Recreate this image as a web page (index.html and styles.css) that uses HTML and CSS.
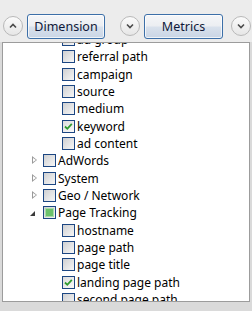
FILE: index.html
```html
<!DOCTYPE html>
<html lang="en">
<head>
    <meta charset="UTF-8">
    <title>Dimension picker</title>
    <link rel="stylesheet" href="styles.css">
</head>
<body>
    <div class="toolbar">
        <button class="round" title="Up">
            <svg width="10" height="10" viewBox="0 0 10 10"><path d="M2 6.5 L5 3.5 L8 6.5" fill="none" stroke="#4a4a4a" stroke-width="1.6"/></svg>
        </button>
        <button class="pick">Dimension</button>
        <button class="round gap" title="Down">
            <svg width="10" height="10" viewBox="0 0 10 10"><path d="M2 3.5 L5 6.5 L8 3.5" fill="none" stroke="#4a4a4a" stroke-width="1.6"/></svg>
        </button>
        <button class="pick metrics">Metrics</button>
        <button class="round last" title="Down">
            <svg width="10" height="10" viewBox="0 0 10 10"><path d="M2 3.5 L5 6.5 L8 3.5" fill="none" stroke="#4a4a4a" stroke-width="1.6"/></svg>
        </button>
    </div>

    <div class="tree">
        <ul class="items">
            <li class="row child"><span class="box"></span><span class="label">ad group</span></li>
            <li class="row child"><span class="box"></span><span class="label">referral path</span></li>
            <li class="row child"><span class="box"></span><span class="label">campaign</span></li>
            <li class="row child"><span class="box"></span><span class="label">source</span></li>
            <li class="row child"><span class="box"></span><span class="label">medium</span></li>
            <li class="row child"><span class="box checked"><svg width="11" height="11" viewBox="0 0 11 11"><path d="M2 5.5 L4.3 7.8 L8.8 2.8" fill="none" stroke="#2f9b2f" stroke-width="1.8"/></svg></span><span class="label">keyword</span></li>
            <li class="row child"><span class="box"></span><span class="label">ad content</span></li>
            <li class="row"><span class="expander closed"></span><span class="box"></span><span class="label">AdWords</span></li>
            <li class="row"><span class="expander closed"></span><span class="box"></span><span class="label">System</span></li>
            <li class="row"><span class="expander closed"></span><span class="box"></span><span class="label">Geo / Network</span></li>
            <li class="row"><span class="expander open"></span><span class="box partial"></span><span class="label">Page Tracking</span></li>
            <li class="row child"><span class="box"></span><span class="label">hostname</span></li>
            <li class="row child"><span class="box"></span><span class="label">page path</span></li>
            <li class="row child"><span class="box"></span><span class="label">page title</span></li>
            <li class="row child"><span class="box checked"><svg width="11" height="11" viewBox="0 0 11 11"><path d="M2 5.5 L4.3 7.8 L8.8 2.8" fill="none" stroke="#2f9b2f" stroke-width="1.8"/></svg></span><span class="label">landing page path</span></li>
            <li class="row child"><span class="box"></span><span class="label">second page path</span></li>
            <li class="row child"><span class="box"></span><span class="label">exit page path</span></li>
        </ul>
    </div>
</body>
</html>
```

FILE: styles.css
```css
body {
    margin: 0;
    background-color: #dadada;
    font-family: "Noto Sans", "Open Sans", sans-serif;
    font-size: 12px;
    color: #000;
}
.toolbar {
    display: flex;
    align-items: center;
    height: 42px;
    padding: 10px 0 0 3px;
    box-sizing: border-box;
    background-color: #ececec;
}
.round {
    width: 20px;
    height: 20px;
    padding: 0;
    border: 1px solid #b9b9b9;
    border-radius: 50%;
    background: linear-gradient(#fbfbfb, #e6e6e6);
    display: flex;
    align-items: center;
    justify-content: center;
}
.round.gap {
    margin-left: 15px;
}
.round.last {
    margin-left: 8px;
}
.pick {
    width: 78px;
    height: 25px;
    margin-left: 4px;
    padding: 0;
    border: 1px solid #3c6fa8;
    border-radius: 3px;
    background: linear-gradient(#f5f6f8, #eceef2 48%, #d9e1ec 52%, #c9d5e5);
    box-shadow: inset 0 0 0 1px rgba(255, 255, 255, 0.7);
    font-family: "Noto Sans", "Open Sans", sans-serif;
    font-size: 12.5px;
    color: #101838;
}
.pick.metrics {
    width: 79px;
}
.tree {
    margin: 0 2px 0 2px;
    height: 258px;
    border: 1px solid #9c9c9c;
    background-color: #fff;
    overflow: hidden;
}
.items {
    list-style: none;
    margin: -12px 0 0 0;
    padding: 0;
}
.row {
    display: flex;
    align-items: center;
    height: 17.33px;
    padding-left: 25px;
}
.row.child {
    padding-left: 59px;
}
.expander {
    width: 15px;
    height: 13px;
    position: relative;
}
.expander.closed::before {
    content: "";
    position: absolute;
    left: 4px;
    top: 2px;
    border-left: 5px solid #9a9a9a;
    border-top: 4.5px solid transparent;
    border-bottom: 4.5px solid transparent;
}
.expander.closed::after {
    content: "";
    position: absolute;
    left: 5px;
    top: 4px;
    border-left: 3px solid #fff;
    border-top: 2.5px solid transparent;
    border-bottom: 2.5px solid transparent;
}
.expander.open::before {
    content: "";
    position: absolute;
    left: 2px;
    top: 5px;
    border-right: 5px solid #3a3a3a;
    border-top: 5px solid transparent;
}
.box {
    width: 13px;
    height: 13px;
    box-sizing: border-box;
    border: 1px solid #1c4682;
    background: linear-gradient(135deg, #cfd0d2, #f6f6f6);
    display: flex;
    align-items: center;
    justify-content: center;
    flex-shrink: 0;
}
.box.checked {
    background: linear-gradient(135deg, #dcdcdc, #fafafa);
}
.box.partial::before {
    content: "";
    width: 7px;
    height: 7px;
    background-color: #6cc26c;
    box-shadow: 0 0 0 1px #a9dba9;
}
.label {
    margin-left: 2px;
    white-space: nowrap;
    line-height: 17px;
}
```
